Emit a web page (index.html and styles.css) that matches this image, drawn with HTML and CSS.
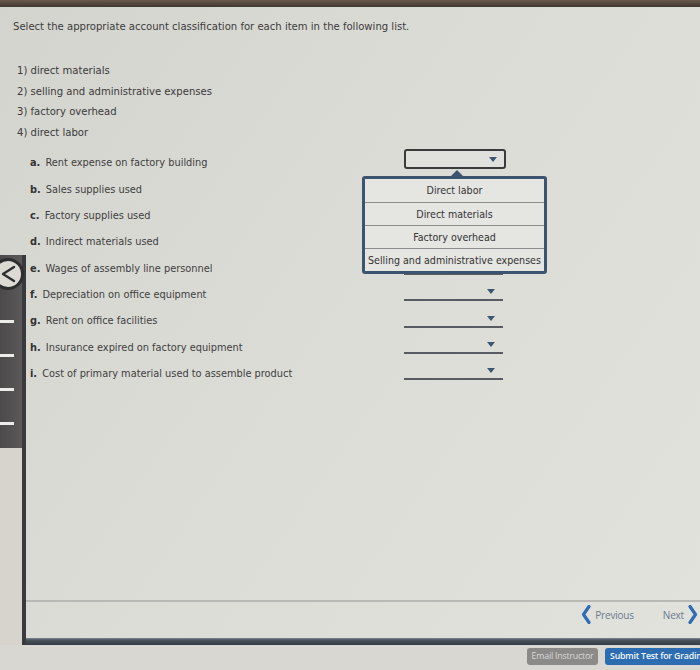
FILE: index.html
```html
<!DOCTYPE html>
<html lang="en">
<head>
<meta charset="utf-8">
<title>Account classification</title>
<link rel="stylesheet" href="styles.css">
</head>
<body>
<div class="topbar"></div>
<div class="screen">
  <main class="content">
    <p class="title">Select the appropriate account classification for each item in the following list.</p>
    <ul class="legend">
      <li>1) direct materials</li>
      <li>2) selling and administrative expenses</li>
      <li>3) factory overhead</li>
      <li>4) direct labor</li>
    </ul>
    <div class="items">
      <div class="row">
        <span class="label"><b>a.</b> Rent expense on factory building</span>
        <div class="select boxed">
          <span class="caret"></span>
          <div class="popup">
            <div class="option">Direct labor</div>
            <div class="option">Direct materials</div>
            <div class="option">Factory overhead</div>
            <div class="option">Selling and administrative expenses</div>
          </div>
        </div>
      </div>
      <div class="row"><span class="label"><b>b.</b> Sales supplies used</span><div class="select line"><span class="caret"></span></div></div>
      <div class="row"><span class="label"><b>c.</b> Factory supplies used</span><div class="select line"><span class="caret"></span></div></div>
      <div class="row"><span class="label"><b>d.</b> Indirect materials used</span><div class="select line"><span class="caret"></span></div></div>
      <div class="row"><span class="label"><b>e.</b> Wages of assembly line personnel</span><div class="select line"><span class="caret"></span></div></div>
      <div class="row"><span class="label"><b>f.</b> Depreciation on office equipment</span><div class="select line"><span class="caret"></span></div></div>
      <div class="row"><span class="label"><b>g.</b> Rent on office facilities</span><div class="select line"><span class="caret"></span></div></div>
      <div class="row"><span class="label"><b>h.</b> Insurance expired on factory equipment</span><div class="select line"><span class="caret"></span></div></div>
      <div class="row"><span class="label"><b>i.</b> Cost of primary material used to assemble product</span><div class="select line"><span class="caret"></span></div></div>
    </div>
  </main>
  <nav class="pager">
    <a class="pager-link prev">
      <svg class="chev" width="10" height="19" viewBox="0 0 10 19"><polyline points="8,1.5 2.5,9.5 8,17.5" fill="none" stroke="#2f6cb3" stroke-width="3.2" stroke-linecap="round" stroke-linejoin="round"/></svg>
      <span>Previous</span>
    </a>
    <a class="pager-link next">
      <span>Next</span>
      <svg class="chev" width="10" height="19" viewBox="0 0 10 19"><polyline points="2,1.5 7.5,9.5 2,17.5" fill="none" stroke="#2f6cb3" stroke-width="3.2" stroke-linecap="round" stroke-linejoin="round"/></svg>
    </a>
  </nav>
  <div class="divider"></div>
  <footer class="footer">
    <button class="btn btn-grey">Email Instructor</button>
    <button class="btn btn-blue">Submit Test for Grading</button>
  </footer>
  <aside class="rail">
    <div class="rail-strip">
      <span class="rail-bar"></span>
      <span class="rail-bar"></span>
      <span class="rail-bar"></span>
      <span class="rail-bar"></span>
    </div>
    <button class="rail-toggle">
      <svg width="16" height="20" viewBox="0 0 16 20"><polyline points="13,3 2,10 13,17" fill="none" stroke="#2e2e2e" stroke-width="2.4" stroke-linecap="round" stroke-linejoin="round"/></svg>
    </button>
  </aside>
</div>
</body>
</html>
```
FILE: styles.css
```css
* { box-sizing: border-box; }
html, body { margin: 0; padding: 0; }
body {
  width: 700px;
  height: 670px;
  overflow: hidden;
  background: linear-gradient(125deg, #d4d4ce 0%, #dcdcd6 45%, #e2e2dc 100%);
  font-family: "DejaVu Sans Condensed", "DejaVu Sans", sans-serif;
  font-stretch: condensed;
  color: #3a3a3a;
}
.topbar {
  height: 7px;
  background: linear-gradient(#6a5a4c, #3f3730);
}
.screen {
  position: relative;
  height: 663px;
  display: flex;
  flex-direction: column;
}
.content {
  flex: 1;
  padding-left: 13px;
}
.title {
  margin: 13px 0 0 0;
  font-size: 11.2px;
  line-height: 14px;
  color: #3c3c3c;
}
.legend {
  list-style: none;
  margin: 27px 0 0 0;
  padding: 0 0 0 4px;
  font-size: 11.2px;
  line-height: 20.7px;
  color: #3a3a3a;
}
.items {
  margin-top: 6px;
}
.row {
  display: flex;
  align-items: center;
  height: 26.3px;
}
.label {
  width: 391px;
  padding-left: 17px;
  font-size: 10.9px;
  color: #3e3e3e;
}
.label b {
  font-weight: bold;
  color: #333;
  margin-right: 2px;
}
.select {
  position: relative;
  width: 100px;
}
.select.boxed {
  height: 20px;
  width: 102px;
  align-self: flex-start;
  margin-top: -1px;
  border: 2px solid #3a3a3a;
  border-radius: 3px;
  background: #e0e0dc;
}
.select.line {
  height: 12px;
  width: 99px;
  margin-top: 2px;
  border-bottom: 2px solid #585c62;
}
.caret {
  position: absolute;
  width: 0;
  height: 0;
  border-left: 4.5px solid transparent;
  border-right: 4.5px solid transparent;
  border-top: 5px solid #3e5672;
}
.boxed .caret { right: 7px; top: 6px; }
.line .caret { right: 8px; top: 0; }
.popup {
  position: absolute;
  left: -44px;
  top: 25px;
  width: 185px;
  border: 3px solid #3d5470;
  border-radius: 3px;
  background: #e5e5e1;
  z-index: 5;
}
.popup::before {
  content: "";
  position: absolute;
  left: 86px;
  top: -9px;
  border-left: 6px solid transparent;
  border-right: 6px solid transparent;
  border-bottom: 6px solid #3d5470;
}
.option {
  height: 23px;
  line-height: 23px;
  text-align: center;
  font-size: 10.6px;
  color: #333;
  border-top: 1px solid #8c8c8c;
  white-space: nowrap;
}
.option:first-child { border-top: none; }
.pager {
  height: 38px;
  border-top: 2px solid #b8b8b4;
  display: flex;
  justify-content: flex-end;
  align-items: flex-start;
  gap: 29px;
  padding: 3px 2px 0 0;
  font-family: "Open Sans", sans-serif;
  font-stretch: normal;
}
.pager-link {
  display: flex;
  align-items: center;
  gap: 4px;
  font-size: 10px;
  font-stretch: normal;
  color: #6a7a8e;
  letter-spacing: -0.2px;
}
.divider {
  height: 7px;
  background: linear-gradient(#7a8796 0%, #4a525c 30%, #353b43 100%);
}
.footer {
  height: 25px;
  display: flex;
  justify-content: flex-end;
  align-items: flex-start;
  gap: 7px;
  padding-top: 3px;
  background: #d8d7d1;
  font-family: "Open Sans", sans-serif;
  font-stretch: normal;
  overflow: hidden;
}
.btn {
  height: 17px;
  border: none;
  border-radius: 3px;
  padding: 0 4px;
  font-family: "Open Sans", sans-serif;
  font-stretch: normal;
  font-size: 8.8px;
  line-height: 17px;
  white-space: nowrap;
  letter-spacing: -0.2px;
}
.btn-grey {
  width: 71px;
  background: #8c8a88;
  color: #d8d8d6;
  text-align: center;
}
.btn-blue {
  width: 114px;
  margin-right: -19px;
  background: #2c6db1;
  color: #f2f6fa;
  font-weight: 600;
  text-align: left;
  padding-left: 5px;
}
.rail {
  position: absolute;
  left: 0;
  top: 248px;
  width: 26px;
  height: 390px;
  border-right: 4px solid #3a3a3e;
  background: #d6d4cd;
}
.rail-strip {
  height: 193px;
  padding-top: 65px;
  display: flex;
  flex-direction: column;
  gap: 31px;
  background: linear-gradient(90deg, #4c4a4a, #5a5858);
}
.rail-bar {
  display: block;
  width: 14px;
  height: 3px;
  background: #ececea;
}
.rail-toggle {
  position: absolute;
  left: -8px;
  top: 3px;
  width: 32px;
  height: 32px;
  padding: 0 0 0 6px;
  border: 3px solid #2e2e2e;
  border-radius: 50%;
  background: #dcdad3;
  display: flex;
  align-items: center;
}
```
